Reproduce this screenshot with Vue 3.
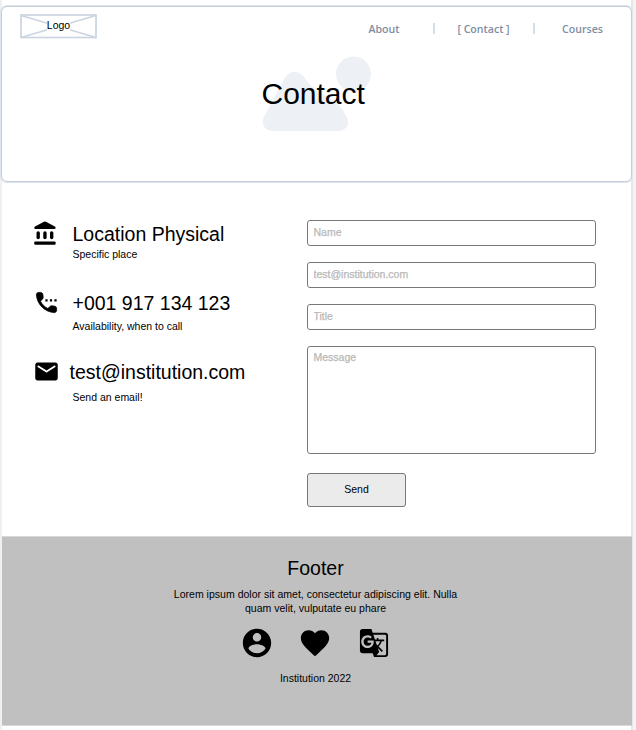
<script setup>
const links = ['About', '[ Contact ]', 'Courses']
const fields = ['Name', 'test@institution.com', 'Title']
</script>

<template>
  <div class="page">
    <header class="hero">
      <div class="bar">
        <div class="logo">
          <svg class="cross" width="77" height="25" viewBox="0 0 77 25">
            <rect x="1" y="1" width="75" height="22.500" />
            <path d="M1 1.500L76 23.500M1 23.500L76 1.500" />
          </svg>
          <span class="logo-text">Logo</span>
        </div>
        <nav class="nav">
          <template v-for="(link, i) in links" :key="link">
            <i v-if="i" class="sep"></i>
            <a :class="['link', 'link-' + i]">{{ link }}</a>
          </template>
        </nav>
      </div>
      <div class="title">
        <svg class="art" width="110" height="76" viewBox="0 0 110 76">
          <circle cx="91.500" cy="18" r="17.500" />
          <path d="M22.500 22.500C28 13.500 37 13.500 43 22.500C54.500 40 75.500 40 84 60C89 68 84.500 75 76.500 75H11.500C2.500 75 -2 68 2.500 60Z" />
        </svg>
        <h1>Contact</h1>
      </div>
    </header>

    <main class="main">
      <section class="info">
        <div class="item place">
          <svg class="icon" width="27" height="27" viewBox="0 0 24 24"><rect x="4" y="10" width="3" height="7" rx="1.500" /><rect x="10" y="10" width="3" height="7" rx="1.500" /><rect x="16" y="10" width="3" height="7" rx="1.500" /><rect x="2" y="19" width="19" height="3" rx="1" /><path d="M10.600 1.500 2.700 5.700Q2 6.100 2 6.800 2 8 3.200 8h16.600Q21 8 21 6.800q0-.7-.7-1.100l-7.900-4.200q-.9-.4-1.800 0z" /></svg>
          <div class="words"><h2>Location Physical</h2><p>Specific place</p></div>
        </div>
        <div class="item phone">
          <svg class="icon" width="27" height="27" viewBox="0 0 24 24"><path d="M11 9h2v2h-2zM15 9h2v2h-2zM19 9h2v2h-2z" /><path class="handset" d="m19.230 15.260-2.540-.29c-.61-.07-1.210.14-1.640.57l-1.840 1.840c-2.830-1.440-5.150-3.750-6.590-6.590l1.850-1.850c.43-.43.64-1.030.57-1.640l-.29-2.520C8.630 3.770 7.780 3 6.760 3H5.030C3.900 3 2.960 3.940 3.030 5.070c.53 8.540 7.360 15.360 15.890 15.890 1.130.07 2.070-.87 2.070-2v-1.730c.01-1.010-.76-1.860-1.760-1.970z" /></svg>
          <div class="words"><h2>+001 917 134 123</h2><p>Availability, when to call</p></div>
        </div>
        <div class="item mail">
          <svg class="icon" width="27" height="27" viewBox="0 0 24 24"><path d="M20 4H4c-1.100 0-1.990.9-1.990 2L2 18c0 1.100.9 2 2 2h16c1.100 0 2-.9 2-2V6c0-1.100-.9-2-2-2zm-.4 4.250-7.070 4.420c-.32.2-.74.2-1.060 0L4.400 8.250c-.25-.16-.4-.43-.4-.72 0-.67.73-1.070 1.300-.72L12 11l6.700-4.190c.57-.35 1.300.05 1.300.72 0 .29-.15.56-.4.72z" /></svg>
          <div class="words"><h2>test@institution.com</h2><p>Send an email!</p></div>
        </div>
      </section>

      <form class="form" @submit.prevent>
        <input v-for="f in fields" :key="f" type="text" :placeholder="f" />
        <textarea placeholder="Message"></textarea>
        <button type="button">Send</button>
      </form>
    </main>

    <footer class="footer">
      <h2>Footer</h2>
      <p class="blurb">Lorem ipsum dolor sit amet, consectetur adipiscing elit. Nulla<br>quam velit, vulputate eu phare</p>
      <div class="socials">
        <svg width="34" height="34" viewBox="0 0 24 24"><path d="M12 2C6.480 2 2 6.480 2 12s4.480 10 10 10 10-4.480 10-10S17.520 2 12 2zm0 3c1.660 0 3 1.340 3 3s-1.340 3-3 3-3-1.340-3-3 1.340-3 3-3zm0 14.200c-2.500 0-4.710-1.280-6-3.220.03-1.990 4-3.080 6-3.080 1.990 0 5.970 1.090 6 3.080-1.290 1.940-3.500 3.220-6 3.220z" /></svg>
        <svg width="34" height="34" viewBox="0 0 24 24"><path d="m12 21.350-1.450-1.320C5.400 15.360 2 12.280 2 8.500 2 5.420 4.420 3 7.500 3c1.740 0 3.410.81 4.500 2.090C13.090 3.810 14.760 3 16.500 3 19.580 3 22 5.420 22 8.500c0 3.780-3.400 6.860-8.550 11.540L12 21.350z" /></svg>
        <svg width="34" height="34" viewBox="-1.300 -1.300 26.600 26.600"><path d="M21 4H11l-1-3H3c-1.100 0-2 .9-2 2v15c0 1.100.9 2 2 2h8l1 3h9c1.100 0 2-.9 2-2V6c0-1.100-.9-2-2-2zM7 16c-2.760 0-5-2.240-5-5s2.240-5 5-5c1.350 0 2.480.5 3.350 1.300L9.030 8.570c-.38-.36-1.040-.78-2.030-.78-1.740 0-3.150 1.440-3.150 3.210S5.260 14.210 7 14.210c2.010 0 2.840-1.440 2.920-2.410H7v-1.710h4.680c.07.31.12.61.12 1.020C11.800 13.970 9.890 16 7 16zm6.170-5.420h3.700c-.43 1.250-1.110 2.430-2.050 3.470-.31-.35-.6-.72-.86-1.100l-.79-2.370zm8.330 9.920c0 .55-.45 1-1 1H14l2-2.500-1.040-3.100 3.100 3.100.92-.92-3.300-3.250.02-.02c1.130-1.250 1.930-2.690 2.400-4.220H20v-1.300h-4.530V8h-1.290v1.290h-1.440L11.460 5.500h9.040c.55 0 1 .45 1 1v14z" /></svg>
      </div>
      <p class="copy">Institution 2022</p>
    </footer>
  </div>
</template>

<style>
body { margin: 0; background: #fff; }
</style>

<style scoped>
* { box-sizing: border-box; }
h1, h2, p { margin: 0; font-weight: 400; }
.page {
  width: 636px; height: 730px; padding: 6px 3px 0 2px; overflow: hidden;
  font-family: "Liberation Sans", Arial, sans-serif; color: #000;
  background: linear-gradient(90deg, #f0f0f0 0 2px, #fff 2px 631px, #e7e7e7 631px 633px, #f3f3f3 633px);
}
.hero {
  height: 176px; width: 631px; margin-left: -1px; background: #fff;
  border: 1px solid #c3ceda; border-radius: 6px;
  box-shadow: 0 0 0 1px #e0e6ed;
}
.bar { display: flex; height: 48px; padding: 7px 0 0 18px; justify-content: space-between; }
.logo { display: grid; width: 77px; height: 25px; }
.logo > * { grid-area: 1 / 1; }
.cross { fill: none; stroke: #cbd5e0; stroke-width: 1.700; }
.logo-text {
  place-self: center; font-size: 10.500px; line-height: 11px; margin-bottom: 3px;
  background: #fff;
}
.nav { display: flex; height: 29px; align-items: center; margin-right: 28px; }
.link { font: 600 10.600px/16px "Open Sans", sans-serif; color: #7f8ea3; white-space: nowrap; }
.sep { width: 2px; height: 11px; background: #d5dee7; }
.link-0 { margin-right: 33.500px; }
.link-1 { margin: 0 23px 0 22.500px; }
.link-2 { margin-left: 27.500px; }
.title { display: grid; width: 110px; height: 76px; margin: 1px 0 0 260px; }
.title > * { grid-area: 1 / 1; }
.art { fill: #edf1f6; }
h1 { font-size: 30px; line-height: 34px; padding-top: 21px; margin-left: -.5px; white-space: nowrap; }
.main { display: flex; height: 354px; }
.info { width: 305px; padding: 37px 0 0 29.500px; }
.item { display: flex; height: 69px; }
.icon { flex: none; }
.handset { stroke: #000; stroke-width: .7; }
.words { padding-left: 14px; white-space: nowrap; }
h2 { font-size: 19.500px; line-height: 24px; }
.words h2 { padding-top: 3px; height: 28px; }
.words p { font-size: 10.500px; line-height: 14px; }
.phone .words p { margin-top: 3px; }
.mail .words p { margin-top: 5px; }
.place .icon { margin: 1px -.7px 0 .7px; }
.phone .icon { margin: 1px -1.500px 0 1.500px; }
.mail .icon { margin: 1px -1.500px 0 1.500px; }
.mail h2 { margin-left: -3px; }
.form { display: flex; flex-direction: column; width: 289px; padding-top: 38px; }
input, textarea, button {
  font: 10.500px/14px "Liberation Sans", Arial, sans-serif;
  border: 1px solid #777; border-radius: 3px; background: #fff; outline: none; margin: 0;
}
input { height: 26px; width: 289px; margin-bottom: 16px; padding: 0 5.500px 2px; }
textarea { width: 289px; height: 108px; padding: 3px 5.500px; resize: none; }
input::placeholder, textarea::placeholder { color: #b8b8b8; opacity: 1; -webkit-text-stroke: .25px #b8b8b8; }
button { width: 99px; height: 34px; margin-top: 19px; background: #ebebeb; padding: 0 0 2px; color: #000; }
.footer {
  display: flex; flex-direction: column; align-items: center; width: 630px; height: 190px;
  background: #c0c0c0; border-top: 1px solid #d8d8d8; border-bottom: 1px solid #d8d8d8;
  padding: 19px 3px 0 0; text-align: center;
}
.blurb { font-size: 10.540px; line-height: 14px; margin-top: 7px; white-space: nowrap; }
.socials { display: flex; gap: 24.500px; margin: 11px 1px 0 0; }
.copy { font-size: 10.500px; line-height: 14px; margin-top: 11px; }
</style>
